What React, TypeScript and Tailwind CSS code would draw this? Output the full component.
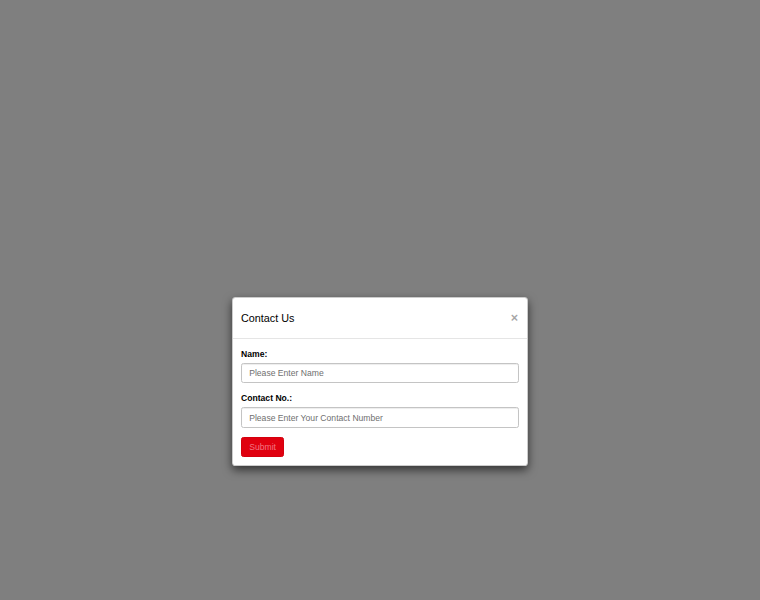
export default function App() {
    return (
        <div className="min-h-screen w-full bg-[#7f7f7f] pt-[297px] font-['Liberation_Sans',Arial,sans-serif] text-[#333]">
            <div className="mx-auto w-[296px] rounded-[3.6px] border border-black/20 bg-white shadow-[0_4px_10px_rgba(0,0,0,0.6)]">
                <div className="flex h-[41px] items-center justify-between border-b border-[#e5e5e5] px-[8px]">
                    <h4 className="text-[10.8px] leading-[15px] text-black">Contact Us</h4>
                    <button className="mr-[1px] text-[12.6px] font-bold leading-none text-black opacity-35">×</button>
                </div>
                <form className="px-[8px] pt-[9px] pb-[8px]" onSubmit={(e) => e.preventDefault()}>
                    <div className="mb-[9px]">
                        <label className="mb-[3px] block text-[8.6px] font-bold leading-[12px] text-black">Name:</label>
                        <input
                            type="text"
                            placeholder="Please Enter Name"
                            className="block h-[20.4px] w-full rounded-[2.4px] border border-[#c4c4c4] px-[7.2px] text-[8.6px] text-[#555] shadow-[inset_0_1px_1px_rgba(0,0,0,0.075)] outline-none placeholder:text-[#6f6f6f]"
                        />
                    </div>
                    <div className="mb-[9px]">
                        <label className="mb-[3px] block text-[8.6px] font-bold leading-[12px] text-black">Contact No.:</label>
                        <input
                            type="text"
                            placeholder="Please Enter Your Contact Number"
                            className="block h-[20.4px] w-full rounded-[2.4px] border border-[#c4c4c4] px-[7.2px] text-[8.6px] text-[#555] shadow-[inset_0_1px_1px_rgba(0,0,0,0.075)] outline-none placeholder:text-[#6f6f6f]"
                        />
                    </div>
                    <button
                        type="submit"
                        className="block h-[20.4px] rounded-[2.4px] border border-[#d4000e] bg-[#e0000f] px-[7.2px] text-[8.6px] leading-none text-[#f27580]"
                    >
                        Submit
                    </button>
                </form>
            </div>
        </div>
    );
}
